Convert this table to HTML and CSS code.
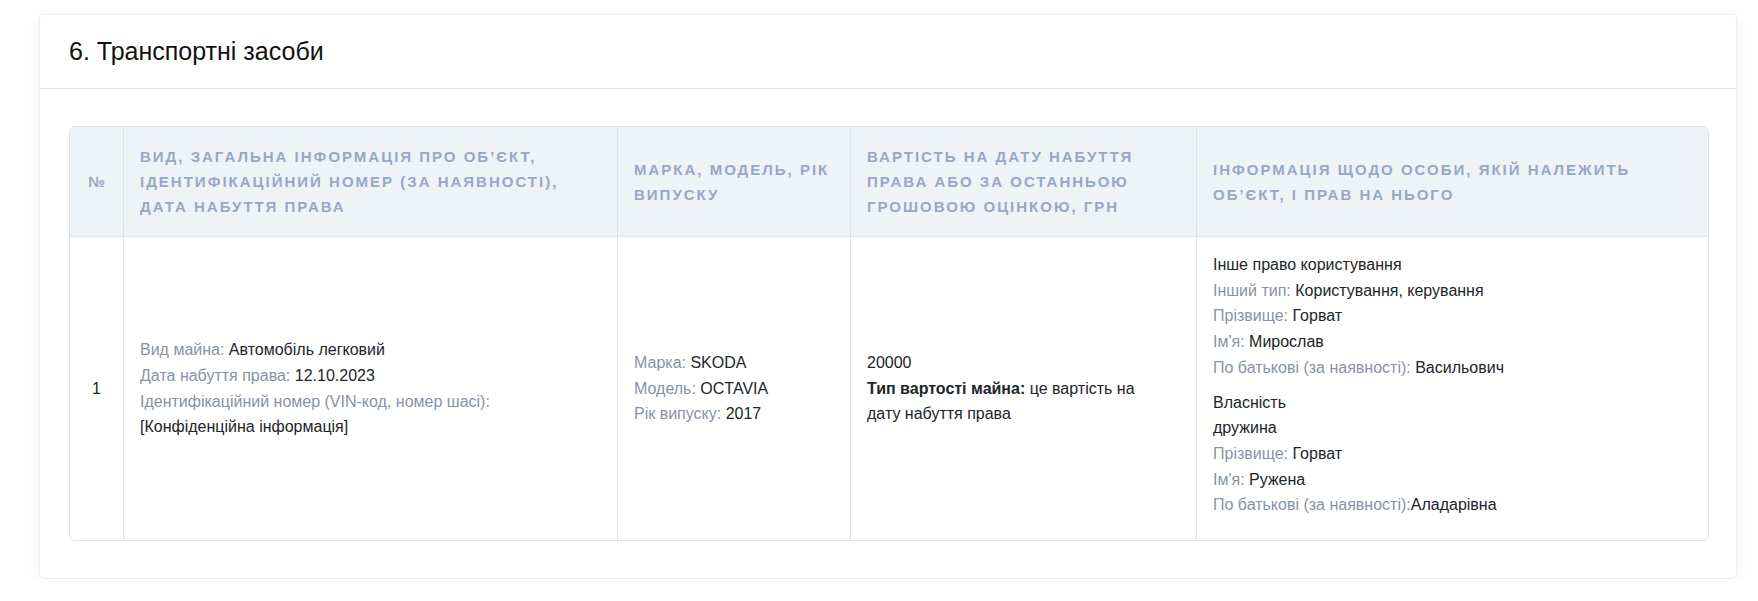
FILE: index.html
```html
<!DOCTYPE html>
<html lang="uk">
<head>
<meta charset="utf-8">
<title>Транспортні засоби</title>
<link rel="stylesheet" href="styles.css">
</head>
<body>
<div class="page">
  <section class="card">
    <header class="card-header">
      <h2 class="card-title">6. Транспортні засоби</h2>
    </header>
    <div class="card-body">
      <table class="data-table">
        <thead>
          <tr>
            <th class="col-num">№</th>
            <th class="col-info">Вид, загальна інформація про об’єкт, ідентифікаційний номер (за наявності), дата набуття права</th>
            <th class="col-brand">Марка, модель, рік випуску</th>
            <th class="col-cost">Вартість на дату набуття права або за останньою грошовою оцінкою, грн</th>
            <th class="col-owner">Інформація щодо особи, якій належить об’єкт, і прав на нього</th>
          </tr>
        </thead>
        <tbody>
          <tr>
            <td class="col-num">1</td>
            <td class="col-info">
              <div><span class="label">Вид майна:</span> Автомобіль легковий</div>
              <div><span class="label">Дата набуття права:</span> 12.10.2023</div>
              <div><span class="label">Ідентифікаційний номер (VIN-код, номер шасі):</span><br>[Конфіденційна інформація]</div>
            </td>
            <td class="col-brand">
              <div><span class="label">Марка:</span> SKODA</div>
              <div><span class="label">Модель:</span> OCTAVIA</div>
              <div><span class="label">Рік випуску:</span> 2017</div>
            </td>
            <td class="col-cost">
              <div>20000</div>
              <div><strong>Тип вартості майна:</strong> це вартість на<br>дату набуття права</div>
            </td>
            <td class="col-owner top">
              <div class="group">
                <div>Інше право користування</div>
                <div><span class="label">Інший тип:</span> Користування, керування</div>
                <div><span class="label">Прізвище:</span> Горват</div>
                <div><span class="label">Ім'я:</span> Мирослав</div>
                <div><span class="label">По батькові (за наявності):</span> Васильович</div>
              </div>
              <div class="group">
                <div>Власність</div>
                <div>дружина</div>
                <div><span class="label">Прізвище:</span> Горват</div>
                <div><span class="label">Ім'я:</span> Ружена</div>
                <div><span class="label">По батькові (за наявності):</span>Аладарівна</div>
              </div>
            </td>
          </tr>
        </tbody>
      </table>
    </div>
  </section>
</div>
</body>
</html>
```
FILE: styles.css
```css
* { box-sizing: border-box; }
html, body {
  margin: 0;
  background: #ffffff;
  font-family: "Liberation Sans", Arial, sans-serif;
  color: #212529;
}
.page {
  padding: 14px 21px 0 39px;
}
.card {
  background: #fff;
  border: 1px solid #eceef1;
  border-radius: 5px;
  box-shadow: 0 2px 14px rgba(30, 40, 70, 0.06);
}
.card-header {
  height: 74px;
  display: flex;
  align-items: center;
  padding: 0 29px;
  border-bottom: 1px solid #dfe3e8;
}
.card-title {
  margin: 0;
  font-size: 25px;
  font-weight: normal;
  color: #111;
}
.card-body {
  padding: 37px 29px 37px;
}
.data-table {
  width: 100%;
  table-layout: fixed;
  border-collapse: separate;
  border-spacing: 0;
  border: 1px solid #dde2e8;
  border-radius: 6px;
  overflow: hidden;
  font-size: 16px;
}
.data-table th,
.data-table td {
  padding: 0 16px;
  border-right: 1px solid #dde2e8;
  text-align: left;
  vertical-align: middle;
}
.data-table th:last-child,
.data-table td:last-child { border-right: none; }
.data-table th {
  background: #eef3f8;
  color: #97a8c3;
  font-size: 15px;
  font-weight: bold;
  text-transform: uppercase;
  letter-spacing: 2px;
  line-height: 25px;
  height: 110px;
  border-bottom: 1px solid #dde2e8;
}
.data-table td {
  line-height: 25.7px;
  height: 303px;
}
.data-table .col-num { width: 54px; text-align: center; padding: 0 8px; }
.data-table th.col-num { letter-spacing: 0; }
.data-table .col-info { width: 494px; }
.data-table .col-brand { width: 233px; }
.data-table .col-cost { width: 346px; }
.data-table .col-owner { width: 511px; }
.data-table td.top {
  vertical-align: top;
  padding-top: 15px;
}
.group { margin-bottom: 9px; }
.label { color: #8892a6; }
strong { font-weight: bold; }
```
